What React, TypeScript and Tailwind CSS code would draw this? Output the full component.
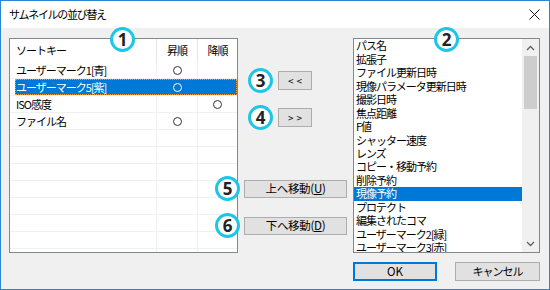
import React from "react";

const F = { fontFamily: '"Noto Sans CJK JP", "Noto Sans", sans-serif' };

function Badge({ n, className }: { n: string; className: string }) {
  return (
    <div
      className={`absolute w-[25px] h-[25px] rounded-full border-[3px] border-[#1cc6e8] bg-white flex items-center justify-center text-[17px] font-bold text-[#222] leading-none tracking-normal ${className}`}
      style={{ fontFamily: '"Open Sans", "Noto Sans", sans-serif' }}
    >
      {n}
    </div>
  );
}

function Dot({ white }: { white?: boolean }) {
  return (
    <span
      className={`inline-block w-[9px] h-[9px] rounded-full border ${white ? "border-white" : "border-[#333]"}`}
    />
  );
}

const leftRows: { name: string; asc?: boolean; desc?: boolean; sel?: boolean }[] = [
  { name: "ユーザーマーク1[青]", asc: true },
  { name: "ユーザーマーク5[紫]", asc: true, sel: true },
  { name: "ISO感度", desc: true },
  { name: "ファイル名", asc: true },
];

const rightItems = [
  "パス名",
  "拡張子",
  "ファイル更新日時",
  "現像パラメータ更新日時",
  "撮影日時",
  "焦点距離",
  "F値",
  "シャッター速度",
  "レンズ",
  "コピー・移動予約",
  "削除予約",
  "現像予約",
  "プロテクト",
  "編集されたコマ",
  "ユーザーマーク2[緑]",
  "ユーザーマーク3[赤]",
];

const btn = "bg-[#e1e1e1] border border-[#adadad] flex items-center justify-center leading-none text-[11.5px] tracking-[-0.3px]";

export default function App() {
  const emptyRows = Array.from({ length: 8 });
  return (
    <div
      className="relative w-[550px] h-[290px] border border-[#2a86d4] flex flex-col text-[11px] tracking-[-1px] text-black overflow-hidden"
      style={F}
    >
      {/* title bar */}
      <div className="h-[27px] bg-white flex items-center justify-between pl-[8px] pr-[8px]">
        <span className="text-[11px] tracking-[-1.3px] leading-none">サムネイルの並び替え</span>
        <svg width="11" height="11" viewBox="0 0 11 11" className="mr-[1px]">
          <path d="M0.5 0.5 L10.5 10.5 M10.5 0.5 L0.5 10.5" stroke="#111" strokeWidth="1" />
        </svg>
      </div>

      {/* body */}
      <div className="flex-1 bg-[#f0f0f0] flex pt-[10px] pl-[8px]">
        {/* left list */}
        <div className="w-[229px] h-[215px] border border-[#828790] bg-white flex flex-col overflow-hidden">
          <div className="h-[23px] flex shrink-0">
            <div className="w-[146px] pl-[6px] flex items-center">ソートキー</div>
            <div className="w-[41px] border-l border-[#e5e5e5] flex items-center justify-center">昇順</div>
            <div className="w-[40px] border-l border-[#e5e5e5] flex items-center justify-center">降順</div>
          </div>
          {leftRows.map((r) => (
            <div key={r.name} className="h-[17px] flex shrink-0 border-b border-[#f0f0f0]">
              <div className={`flex flex-1 ml-[5px] ${r.sel ? "bg-[#0078d7] text-white outline outline-1 outline-dotted outline-[#f39a3c] -outline-offset-1" : ""}`}>
                <div className="w-[141px] pl-[1px] flex items-center leading-none">{r.name}</div>
                <div className={`w-[41px] border-l ${r.sel ? "border-[#0078d7]" : "border-[#f0f0f0]"} flex items-center justify-center`}>
                  {r.asc && <Dot white={r.sel} />}
                </div>
                <div className={`w-[40px] border-l ${r.sel ? "border-[#0078d7]" : "border-[#f0f0f0]"} flex items-center justify-center`}>
                  {r.desc && <Dot white={r.sel} />}
                </div>
              </div>
            </div>
          ))}
          {emptyRows.map((_, i) => (
            <div key={i} className="h-[17px] flex shrink-0 border-b border-[#f0f0f0]">
              <div className="w-[146px]" />
              <div className="w-[41px] border-l border-[#f0f0f0]" />
              <div className="w-[40px] border-l border-[#f0f0f0]" />
            </div>
          ))}
        </div>

        {/* middle buttons */}
        <div className="w-[115px] flex flex-col">
          <button className={`ml-[40px] mt-[33px] w-[34px] h-[19px] ${btn}`}>
            <span className="text-[10px] tracking-[3px] pl-[3px]">{"<<"}</span>
          </button>
          <button className={`ml-[40px] mt-[18px] w-[34px] h-[19px] ${btn}`}>
            <span className="text-[10px] tracking-[3px] pl-[3px]">{">>"}</span>
          </button>
          <button className={`ml-[6px] mt-[53px] w-[103px] h-[18px] ${btn}`}>
            上へ移動(<span className="underline">U</span>)
          </button>
          <button className={`ml-[6px] mt-[19px] w-[103px] h-[18px] ${btn}`}>
            下へ移動(<span className="underline">D</span>)
          </button>
        </div>

        {/* right column */}
        <div className="w-[187px] flex flex-col">
          <div className="h-[215px] border border-[#828790] bg-white flex overflow-hidden">
            <div className="flex-1 flex flex-col overflow-hidden">
              {rightItems.map((t) => (
                <div
                  key={t}
                  className={`h-[13.47px] shrink-0 flex items-center pl-[2px] leading-none ${t === "現像予約" ? "bg-[#0078d7] text-white" : ""}`}
                >
                  {t}
                </div>
              ))}
            </div>
            <div className="w-[17px] bg-[#f0f0f0] flex flex-col items-center">
              <div className="h-[17px] flex items-center justify-center">
                <svg width="9" height="6" viewBox="0 0 9 6">
                  <path d="M1 5 L4.5 1.5 L8 5" stroke="#606060" strokeWidth="1.3" fill="none" />
                </svg>
              </div>
              <div className="w-[13px] h-[53px] bg-[#cdcdcd]" />
              <div className="flex-1" />
              <div className="h-[17px] flex items-center justify-center">
                <svg width="9" height="6" viewBox="0 0 9 6">
                  <path d="M1 1 L4.5 4.5 L8 1" stroke="#606060" strokeWidth="1.3" fill="none" />
                </svg>
              </div>
            </div>
          </div>
          <div className="flex justify-between mt-[9px]">
            <button className="w-[84px] h-[19px] bg-[#e1e1e1] border-2 border-[#0078d7] flex items-center justify-center leading-none text-[11.5px] tracking-normal">
              OK
            </button>
            <button className="w-[85px] h-[19px] bg-[#e1e1e1] border border-[#adadad] flex items-center justify-center leading-none">
              キャンセル
            </button>
          </div>
        </div>
      </div>

      <Badge n="1" className="left-[109px] top-[26px]" />
      <Badge n="2" className="left-[433px] top-[26px]" />
      <Badge n="3" className="left-[247px] top-[67px]" />
      <Badge n="4" className="left-[247px] top-[104px]" />
      <Badge n="5" className="left-[214px] top-[175px]" />
      <Badge n="6" className="left-[214px] top-[212px]" />
    </div>
  );
}
